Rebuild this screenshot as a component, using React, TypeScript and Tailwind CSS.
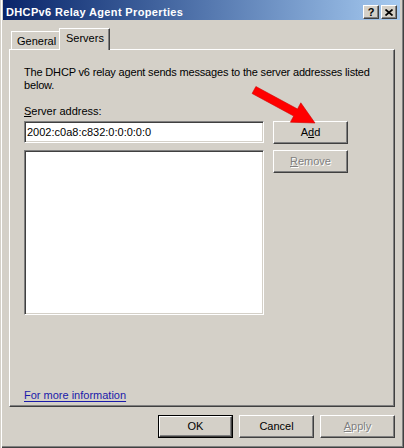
import type { ReactNode } from 'react';

const raised =
  'border border-t-white border-l-white border-r-[#404040] border-b-[#404040] shadow-[inset_-1px_-1px_0_#808080] bg-[#d4d0c8]';
const sunken =
  'border border-t-[#808080] border-l-[#808080] border-r-white border-b-white shadow-[inset_1px_1px_0_#404040,inset_-1px_-1px_0_#d4d0c8] bg-white';
const dim = 'text-[#808080] [text-shadow:1px_1px_0_#fff]';

function Button(
  { children, isDefault, disabled }: { children: ReactNode, isDefault?: boolean, disabled?: boolean },
) {
  const face = `flex flex-1 items-center justify-center ${raised} ${disabled ? dim : ''}`;
  if (isDefault) {
    return (
      <div className="flex w-[75px] h-[23px] border border-black">
        <div className={face}>{children}</div>
      </div>
    );
  }
  return (
    <div className="flex w-[75px] h-[23px]">
      <div className={face}>{children}</div>
    </div>
  );
}

function CaptionButton({ children }: { children: ReactNode }) {
  return (
    <div className={`flex items-center justify-center w-[16px] h-[14px] ${raised}`}>
      {children}
    </div>
  );
}

export default function App() {
  return (
    <div className="relative w-[404px] h-[448px] flex flex-col pl-[3px] pr-[4px] bg-[#d4d0c8] text-black text-[11px] leading-[13px] font-['Liberation_Sans',Arial,sans-serif] shadow-[inset_1px_0_0_#d4d0c8,inset_2px_0_0_#fff,inset_-1px_-1px_0_#404040,inset_-2px_-2px_0_#808080]">
      {/* caption */}
      <div className="flex items-start h-[20px] pl-[3px] pr-[3px] bg-linear-to-r from-[#0a246a] to-[#a6caf0]">
        <span className="flex-1 mt-[6px] font-bold text-white tracking-[0.35px]">DHCPv6 Relay Agent Properties</span>
        <div className="flex gap-[2px] mt-[5px]">
          <CaptionButton>
            <span className="font-bold text-[11px] leading-[11px]">?</span>
          </CaptionButton>
          <CaptionButton>
            <svg width="8" height="7" viewBox="0 0 8 7">
              <path d="M0.5 0.5 L7.5 6.5 M7.5 0.5 L0.5 6.5" stroke="#000" strokeWidth="1.7" />
            </svg>
          </CaptionButton>
        </div>
      </div>

      {/* tabs */}
      <div className="flex items-end h-[21px] mt-[8px] ml-[8px]">
        <div className="w-[48px] h-[18px] pl-[5px] pt-[3px] border-t border-l border-white">
          General
        </div>
        <div className="relative z-10 w-[51px] h-[22px] -mb-px pl-[6px] pt-[3px] bg-[#d4d0c8] border-t border-l border-r border-t-white border-l-white border-r-[#404040] shadow-[inset_-1px_0_0_#808080]">
          Servers
        </div>
      </div>

      {/* tab page */}
      <div className="flex flex-col w-[386px] h-[358px] ml-[6px] pt-[16px] pl-[14px] pb-[4px] border border-t-white border-l-white border-r-[#404040] border-b-[#404040] shadow-[inset_-1px_-1px_0_#808080]">
        <p className="tracking-[-0.17px]">
          The DHCP v6 relay agent sends messages to the server addresses listed
          <br />
          below.
        </p>
        <div className="mt-[13px]">
          <span className="underline">S</span>erver address:
        </div>
        <div className="flex gap-[9px] mt-[3px]">
          <div className="flex flex-col w-[240px]">
            <div className={`flex items-center h-[22px] pl-[2px] ${sunken}`}>2002:c0a8:c832:0:0:0:0:0</div>
            <div className={`h-[165px] mt-[7px] ${sunken}`} />
          </div>
          <div className="flex flex-col gap-[6px]">
            <Button>
              <span>A<span className="underline">d</span>d</span>
            </Button>
            <Button disabled>
              <span><span className="underline">R</span>emove</span>
            </Button>
          </div>
        </div>
        <div className="mt-auto">
          <span className="text-[#1a1aaa] underline underline-offset-[2px]">For more information </span>
        </div>
      </div>

      {/* dialog buttons */}
      <div className="flex justify-end gap-[6px] w-[386px] mt-[8px] ml-[6px]">
        <Button isDefault>OK</Button>
        <Button>Cancel</Button>
        <Button disabled>
          <span><span className="underline">A</span>pply</span>
        </Button>
      </div>

      {/* red pointer arrow */}
      <svg className="absolute left-[248px] top-[80px]" width="72" height="48" viewBox="0 0 72 48">
        <polygon
          points="7.9,6.5 49.5,29 52.8,22.8 67,43 42.4,42.2 45.7,36 4.1,13.5"
          fill="#ff0000"
          stroke="#d00000"
          strokeWidth="0.6"
        />
      </svg>
    </div>
  );
}
